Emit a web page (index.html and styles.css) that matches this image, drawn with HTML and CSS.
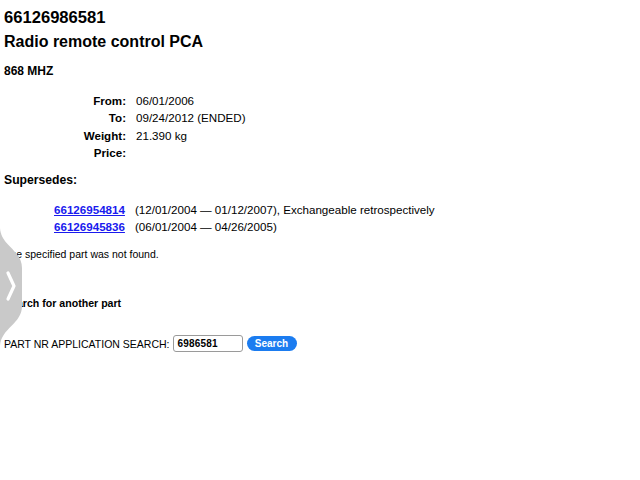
FILE: index.html
```html
<!DOCTYPE html>
<html>
<head>
<meta charset="utf-8">
<link rel="stylesheet" href="styles.css">
</head>
<body>
<div class="page">
  <h1 class="title">66126986581</h1>
  <h1 class="title sub">Radio remote control PCA</h1>
  <h3 class="note">868 MHZ</h3>
  <table class="info">
    <tr><th>From:</th><td>06/01/2006</td></tr>
    <tr><th>To:</th><td>09/24/2012 (ENDED)</td></tr>
    <tr><th>Weight:</th><td>21.390 kg</td></tr>
    <tr><th>Price:</th><td></td></tr>
  </table>
  <h3 class="sect">Supersedes:</h3>
  <table class="supers">
    <tr><td class="lnk"><a href="#">66126954814</a></td><td>(12/01/2004 — 01/12/2007), Exchangeable retrospectively</td></tr>
    <tr><td class="lnk"><a href="#">66126945836</a></td><td>(06/01/2004 — 04/26/2005)</td></tr>
  </table>
  <p class="msg">The specified part was not found.</p>
  <p class="another">Search for another part</p>
  <div class="search">
    <span class="label">PART NR APPLICATION SEARCH:</span>
    <span class="input">6986581</span>
    <span class="btn">Search</span>
  </div>
</div>
<div class="tab">
  <svg width="22" height="118" viewBox="0 0 22 118">
    <path d="M0 0 C1 18 22 22 22 40 L22 78 C22 96 1 100 0 118 Z" fill="#c9c9c9"/>
    <path d="M8 45 L14 58 L8 71" fill="none" stroke="#ffffff" stroke-width="3.2" stroke-linecap="round" stroke-linejoin="round"/>
  </svg>
</div>
</body>
</html>
```

FILE: styles.css
```css
html, body {
  margin: 0;
  padding: 0;
  background: #ffffff;
}
body {
  font-family: "Liberation Sans", Arial, sans-serif;
  color: #000;
  font-size: 11.6px;
}
.page {
  padding: 7px 4px;
}
.title {
  font-size: 16.6px;
  font-weight: bold;
  margin: 0;
  line-height: 22px;
}
.title.sub {
  font-size: 16px;
  margin-top: 2px;
}
.note {
  font-size: 12px;
  margin: 10px 0 0 0;
  line-height: 16px;
}
.info {
  border-collapse: collapse;
  margin: 13px 0 0 0;
}
.info th {
  width: 122px;
  text-align: right;
  font-weight: bold;
  padding: 0 10px 0 0;
  height: 17.3px;
  line-height: 17px;
}
.info td {
  padding: 0;
  line-height: 17px;
}
.sect {
  font-size: 12.2px;
  margin: 11px 0 0 0;
  line-height: 16px;
}
.supers {
  border-collapse: collapse;
  margin: 13px 0 0 50px;
}
.supers td {
  padding: 0;
  line-height: 17px;
}
.supers .lnk {
  padding-right: 10px;
}
.supers a {
  color: #1a1aee;
  font-weight: bold;
  text-decoration: underline;
}
.msg {
  font-size: 10.5px;
  margin: 12px 0 0 0;
  line-height: 14px;
}
.another {
  font-size: 10.6px;
  font-weight: bold;
  margin: 35px 0 0 0;
  line-height: 14px;
}
.search {
  display: flex;
  align-items: center;
  margin-top: 25px;
  font-size: 10.5px;
}
.label {
  margin-right: 3px;
}
.input {
  width: 60px;
  height: 15px;
  border: 1px solid #9a9a9a;
  border-radius: 3px;
  padding: 0 4px;
  font-size: 10px;
  line-height: 15px;
  font-weight: bold;
  letter-spacing: 0.2px;
}
.btn {
  margin-left: 4px;
  background: #1b7cf0;
  color: #fff;
  font-weight: bold;
  font-size: 10px;
  height: 15px;
  line-height: 15px;
  width: 50px;
  text-align: center;
  border-radius: 8px;
}
.tab {
  position: absolute;
  left: 0;
  top: 228px;
  width: 22px;
  height: 118px;
}
.tab svg {
  display: block;
}
```
